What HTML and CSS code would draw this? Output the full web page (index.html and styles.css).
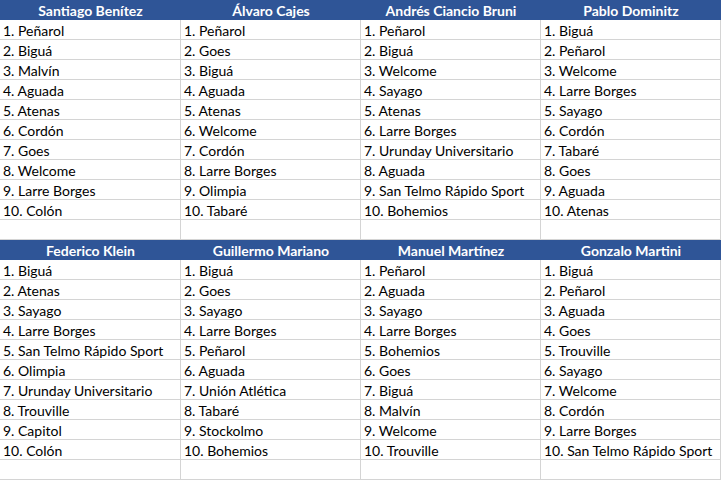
FILE: index.html
```html
<!DOCTYPE html>
<html lang="es">
<head>
<meta charset="utf-8">
<title>Rankings</title>
<link rel="stylesheet" href="styles.css">
</head>
<body>
<div class="sheet">
  <div class="hd">Santiago Benítez</div><div class="hd">Álvaro Cajes</div><div class="hd">Andrés Ciancio Bruni</div><div class="hd">Pablo Dominitz</div>
  <div class="c">1. Peñarol</div><div class="c">1. Peñarol</div><div class="c">1. Peñarol</div><div class="c">1. Biguá</div>
  <div class="c">2. Biguá</div><div class="c">2. Goes</div><div class="c">2. Biguá</div><div class="c">2. Peñarol</div>
  <div class="c">3. Malvín</div><div class="c">3. Biguá</div><div class="c">3. Welcome</div><div class="c">3. Welcome</div>
  <div class="c">4. Aguada</div><div class="c">4. Aguada</div><div class="c">4. Sayago</div><div class="c">4. Larre Borges</div>
  <div class="c">5. Atenas</div><div class="c">5. Atenas</div><div class="c">5. Atenas</div><div class="c">5. Sayago</div>
  <div class="c">6. Cordón</div><div class="c">6. Welcome</div><div class="c">6. Larre Borges</div><div class="c">6. Cordón</div>
  <div class="c">7. Goes</div><div class="c">7. Cordón</div><div class="c">7. Urunday Universitario</div><div class="c">7. Tabaré</div>
  <div class="c">8. Welcome</div><div class="c">8. Larre Borges</div><div class="c">8. Aguada</div><div class="c">8. Goes</div>
  <div class="c">9. Larre Borges</div><div class="c">9. Olimpia</div><div class="c">9. San Telmo Rápido Sport</div><div class="c">9. Aguada</div>
  <div class="c">10. Colón</div><div class="c">10. Tabaré</div><div class="c">10. Bohemios</div><div class="c">10. Atenas</div>
  <div class="c"></div><div class="c"></div><div class="c"></div><div class="c"></div>

  <div class="hd">Federico Klein</div><div class="hd">Guillermo Mariano</div><div class="hd">Manuel Martínez</div><div class="hd">Gonzalo Martini</div>
  <div class="c">1. Biguá</div><div class="c">1. Biguá</div><div class="c">1. Peñarol</div><div class="c">1. Biguá</div>
  <div class="c">2. Atenas</div><div class="c">2. Goes</div><div class="c">2. Aguada</div><div class="c">2. Peñarol</div>
  <div class="c">3. Sayago</div><div class="c">3. Sayago</div><div class="c">3. Sayago</div><div class="c">3. Aguada</div>
  <div class="c">4. Larre Borges</div><div class="c">4. Larre Borges</div><div class="c">4. Larre Borges</div><div class="c">4. Goes</div>
  <div class="c">5. San Telmo Rápido Sport</div><div class="c">5. Peñarol</div><div class="c">5. Bohemios</div><div class="c">5. Trouville</div>
  <div class="c">6. Olimpia</div><div class="c">6. Aguada</div><div class="c">6. Goes</div><div class="c">6. Sayago</div>
  <div class="c">7. Urunday Universitario</div><div class="c">7. Unión Atlética</div><div class="c">7. Biguá</div><div class="c">7. Welcome</div>
  <div class="c">8. Trouville</div><div class="c">8. Tabaré</div><div class="c">8. Malvín</div><div class="c">8. Cordón</div>
  <div class="c">9. Capitol</div><div class="c">9. Stockolmo</div><div class="c">9. Welcome</div><div class="c">9. Larre Borges</div>
  <div class="c">10. Colón</div><div class="c">10. Bohemios</div><div class="c">10. Trouville</div><div class="c">10. San Telmo Rápido Sport</div>
  <div class="c"></div><div class="c"></div><div class="c"></div><div class="c"></div>
</div>
</body>
</html>
```
FILE: styles.css
```css
html, body {
  margin: 0;
  padding: 0;
  background: #ffffff;
}
.sheet {
  display: grid;
  grid-template-columns: 181px 180px 180px 180px;
  grid-auto-rows: 20px;
  font-family: Lato, "Open Sans", sans-serif;
  font-size: 14px;
  color: #000000;
}
.hd {
  box-sizing: border-box;
  background: #2f5597;
  color: #ffffff;
  font-weight: bold;
  text-align: center;
  line-height: 19px;
  padding-top: 1px;
  white-space: nowrap;
}
.c {
  box-sizing: border-box;
  border-right: 1px solid #d4d4d4;
  border-bottom: 1px solid #d4d4d4;
  padding-left: 3px;
  line-height: 17px;
  padding-top: 2px;
  white-space: nowrap;
  overflow: hidden;
}
```
